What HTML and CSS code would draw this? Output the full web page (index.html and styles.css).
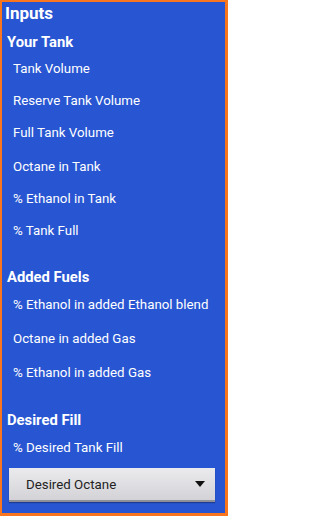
FILE: index.html
```html
<!DOCTYPE html>
<html>
<head>
<meta charset="utf-8">
<link rel="stylesheet" href="styles.css">
</head>
<body>
<div class="screen">
  <h1 class="title">Inputs</h1>

  <h2 class="section">Your Tank</h2>
  <div class="row">Tank Volume</div>
  <div class="row">Reserve Tank Volume</div>
  <div class="row">Full Tank Volume</div>
  <div class="row shift">Octane in Tank</div>
  <div class="row">% Ethanol in Tank</div>
  <div class="row">% Tank Full</div>

  <h2 class="section gap">Added Fuels</h2>
  <div class="row tall">% Ethanol in added Ethanol blend</div>
  <div class="row tall">Octane in added Gas</div>
  <div class="row tall">% Ethanol in added Gas</div>

  <h2 class="section gap">Desired Fill</h2>
  <div class="row tall">% Desired Tank Fill</div>

  <div class="select">
    <span class="select-text">Desired Octane</span>
    <svg class="caret" width="10" height="6" viewBox="0 0 10 6"><path d="M0 0H10L5 6Z" fill="#111"/></svg>
  </div>
</div>
</body>
</html>
```

FILE: styles.css
```css
html, body {
  margin: 0;
  padding: 0;
}
body {
  width: 228px;
  height: 516px;
  overflow: hidden;
  font-family: Roboto, "Noto Sans", "Liberation Sans", sans-serif;
}
.screen {
  box-sizing: border-box;
  width: 228px;
  height: 516px;
  background: #2856d2;
  border-style: solid;
  border-color: #f9761e;
  border-width: 2px 3px 3px 2px;
  color: #fff;
  display: flex;
  flex-direction: column;
}
.title {
  margin: 0;
  padding-left: 3px;
  height: 22px;
  line-height: 22px;
  font-size: 17px;
  font-weight: 700;
}
.section {
  margin: 7px 0 0 0;
  padding-left: 5px;
  height: 22px;
  line-height: 22px;
  font-size: 14.8px;
  font-weight: 700;
}
.section.gap {
  margin-top: 19px;
}
.row {
  height: 32px;
  line-height: 32px;
  padding-left: 11px;
  font-size: 13.3px;
  white-space: nowrap;
}
.row.shift {
  margin-top: 2px;
}
.row.tall {
  height: 34px;
  line-height: 34px;
}
.select {
  margin: 3px 10px 0 7px;
  height: 34px;
  box-sizing: border-box;
  display: flex;
  align-items: center;
  justify-content: space-between;
  padding: 0 10px 0 17px;
  background: linear-gradient(#ebebee, #d3d3d7);
  border-bottom: 2px solid #8f8f99;
  box-shadow: 0 1px 1px rgba(0,0,0,0.3);
  color: #222;
  font-size: 13.3px;
}
.caret {
  display: block;
}
```
